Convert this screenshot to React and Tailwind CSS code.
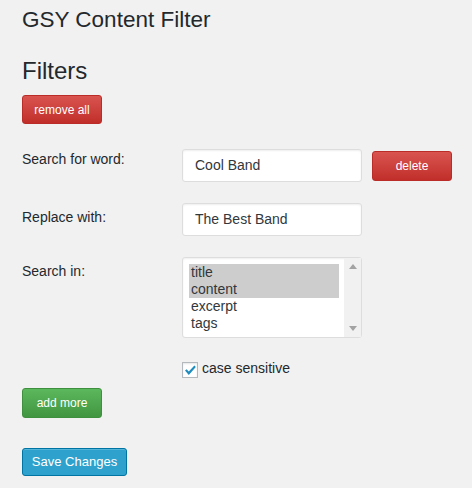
export default function App() {
  const font = { fontFamily: '"Liberation Sans", Arial, sans-serif' };
  return (
    <div className="min-h-[488px] w-[472px] bg-[#f1f1f1] pl-[22px] pt-[9px] text-[#444]" style={font}>
      <h1 className="text-[22.5px] leading-[22px] text-[#23282d]">GSY Content Filter</h1>
      <h2 className="mt-[28px] text-[24px] leading-[24px] text-[#23282d]">Filters</h2>
      <button className="mt-[12px] flex h-[29px] w-[80px] items-center justify-center rounded-[3px] border border-[#b92c28] bg-gradient-to-b from-[#d9534f] to-[#c12e2a] text-[12px] text-white">
        remove all
      </button>

      <div className="mt-[25px] flex items-start">
        <div className="w-[160px] pt-[3px] text-[14px] leading-[14px] text-[#23282d]">Search for word:</div>
        <div className="flex h-[33px] w-[180px] items-center rounded-[3px] border border-[#ddd] bg-white pl-[12px] text-[14px] text-[#32373c] shadow-[inset_0_1px_2px_rgba(0,0,0,0.07)]">
          Cool Band
        </div>
        <button className="ml-[10px] mt-[2px] flex h-[30px] w-[80px] items-center justify-center rounded-[3px] border border-[#b92c28] bg-gradient-to-b from-[#d9534f] to-[#c12e2a] text-[12px] text-white">
          delete
        </button>
      </div>

      <div className="mt-[21px] flex items-start">
        <div className="w-[160px] pt-[7px] text-[14px] leading-[14px] text-[#23282d]">Replace with:</div>
        <div className="flex h-[33px] w-[180px] items-center rounded-[3px] border border-[#ddd] bg-white pl-[12px] text-[14px] text-[#32373c] shadow-[inset_0_1px_2px_rgba(0,0,0,0.07)]">
          The Best Band
        </div>
      </div>

      <div className="mt-[21px] flex items-start">
        <div className="w-[160px] pt-[7px] text-[14px] leading-[14px] text-[#23282d]">Search in:</div>
        <div className="flex h-[81px] w-[180px] rounded-[3px] border border-[#ddd] bg-white shadow-[inset_0_1px_2px_rgba(0,0,0,0.07)]">
          <div className="flex-1 pl-[6px] pr-[5px] pt-[6px] text-[14px] leading-[17px] text-[#32373c]">
            <div className="bg-[#cdcdcd] pl-[2px]">title</div>
            <div className="bg-[#cdcdcd] pl-[2px]">content</div>
            <div className="pl-[2px]">excerpt</div>
            <div className="pl-[2px]">tags</div>
          </div>
          <div className="flex w-[17px] flex-col justify-between bg-[#f1f1f1]">
            <div className="flex h-[17px] items-center justify-center">
              <svg width="8" height="5" viewBox="0 0 8 5"><path d="M0 5 L4 0 L8 5 Z" fill="#a3a3a3" /></svg>
            </div>
            <div className="flex h-[17px] items-center justify-center">
              <svg width="8" height="5" viewBox="0 0 8 5"><path d="M0 0 L8 0 L4 5 Z" fill="#a3a3a3" /></svg>
            </div>
          </div>
        </div>
      </div>

      <div className="ml-[160px] mt-[23px] flex items-start">
        <div className="mt-[1px] flex h-[16px] w-[16px] items-center justify-center border border-[#b4b9be] bg-white shadow-[inset_0_1px_2px_rgba(0,0,0,0.1)]">
          <svg width="14" height="14" viewBox="0 0 14 14">
            <path d="M2 7.6 L3.6 6.2 L5.8 8.6 L11.4 2.6 L12.8 4 L5.8 12 Z" fill="#1e8cbe" />
          </svg>
        </div>
        <span className="ml-[4px] text-[14px] leading-[14px] text-[#23282d]">case sensitive</span>
      </div>

      <button className="mt-[10px] flex h-[30px] w-[80px] items-center justify-center rounded-[3px] border border-[#3e8f3e] bg-gradient-to-b from-[#5cb85c] to-[#419641] text-[12px] text-white">
        add more
      </button>

      <button className="mt-[30px] flex h-[28px] w-[105px] items-center justify-center rounded-[3px] border border-[#0074a2] bg-[#2ea2cc] text-[13px] text-white shadow-[inset_0_1px_0_rgba(120,200,230,0.5)]">
        Save Changes
      </button>
    </div>
  );
}
